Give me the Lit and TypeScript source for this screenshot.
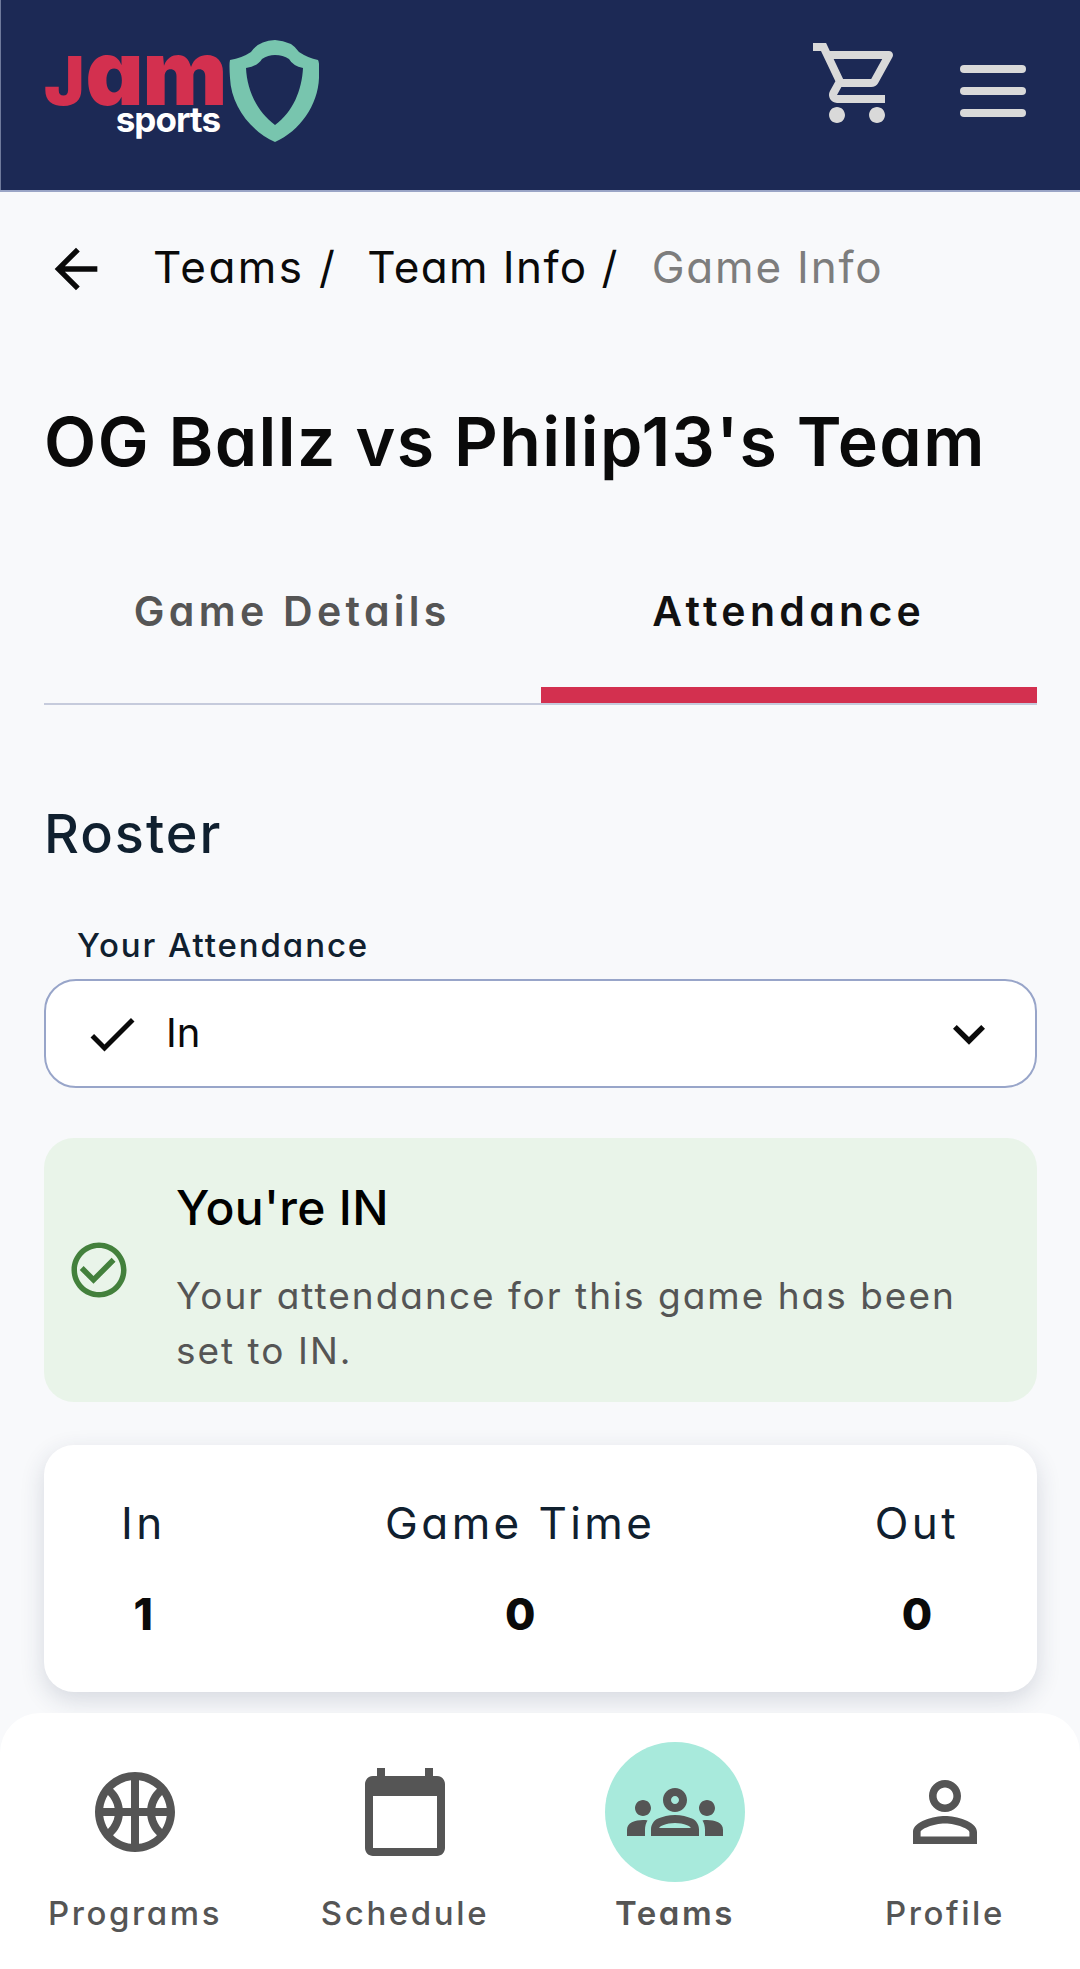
import { LitElement, html, css, svg } from "lit";
import { customElement } from "lit/decorators.js";

const icon = (d: string, size = 96) =>
  html`<svg width=${size} height=${size} viewBox="0 0 24 24" fill="currentColor"><path d=${d}></path></svg>`;

const CART = "M15.55 13c.75 0 1.41-.41 1.75-1.03l3.58-6.49c.37-.66-.11-1.48-.87-1.48H5.21l-.94-2H1v2h2l3.6 7.59-1.35 2.44C4.52 15.37 5.48 17 7 17h12v-2H7l1.1-2h7.45zM6.16 6h12.15l-2.76 5H8.53L6.16 6zM7 18c-1.1 0-1.99.9-1.99 2S5.9 22 7 22s2-.9 2-2-.9-2-2-2zm10 0c-1.1 0-1.99.9-1.99 2s.89 2 1.99 2 2-.9 2-2-.9-2-2-2z";
const BALL = "M12 2C6.48 2 2 6.48 2 12s4.48 10 10 10 10-4.48 10-10S17.52 2 12 2zM5.23 7.75C6.1 8.62 6.7 9.74 6.91 11H4.07c.15-1.18.56-2.28 1.16-3.25zM4.07 13h2.84c-.21 1.26-.81 2.38-1.68 3.25-.6-.97-1.01-2.07-1.16-3.25zM11 19.93c-1.73-.22-3.29-1-4.49-2.14 1.3-1.24 2.19-2.91 2.42-4.79H11v6.93zM11 11H8.93C8.69 9.12 7.81 7.44 6.5 6.2 7.71 5.06 9.27 4.29 11 4.07V11zm8.93 0h-2.84c.21-1.26.81-2.38 1.68-3.25.6.97 1.01 2.07 1.16 3.25zM13 4.07c1.73.22 3.29.99 4.5 2.13-1.31 1.24-2.19 2.92-2.43 4.8H13V4.07zm0 15.86V13h2.07c.24 1.88 1.12 3.55 2.42 4.79-1.2 1.14-2.76 1.92-4.49 2.14zm5.77-3.68c-.87-.87-1.46-1.99-1.68-3.25h2.84c-.15 1.18-.56 2.28-1.16 3.25z";
const CAL = "M20 3h-1V1h-2v2H7V1H5v2H4c-1.1 0-2 .9-2 2v16c0 1.1.9 2 2 2h16c1.1 0 2-.9 2-2V5c0-1.1-.9-2-2-2zm0 18H4V8h16v13z";
const GROUPS = "M4 13c1.1 0 2-.9 2-2 0-1.1-.9-2-2-2s-2 .9-2 2c0 1.1.9 2 2 2zm1.13 1.1C4.76 14.04 4.39 14 4 14c-.99 0-1.93.21-2.78.58C.48 14.9 0 15.62 0 16.43V18h4.5v-1.61c0-.83.23-1.61.63-2.29zM20 13c1.1 0 2-.9 2-2 0-1.1-.9-2-2-2s-2 .9-2 2c0 1.1.9 2 2 2zm4 3.43c0-.81-.48-1.53-1.22-1.85C21.93 14.21 20.99 14 20 14c-.39 0-.76.04-1.13.1.4.68.63 1.46.63 2.29V18H24v-1.57zm-7.76-2.78C15.07 13.13 13.63 12.75 12 12.75c-1.63 0-3.07.39-4.24.9C6.68 14.13 6 15.21 6 16.39V18h12v-1.61c0-1.18-.68-2.26-1.76-2.74zM8.07 16c.09-.23.13-.39.91-.69.97-.38 1.99-.56 3.02-.56s2.05.18 3.02.56c.77.3.81.46.91.69H8.07zM12 8c.55 0 1 .45 1 1s-.45 1-1 1-1-.45-1-1 .45-1 1-1m0-2c-1.66 0-3 1.34-3 3s1.34 3 3 3 3-1.34 3-3-1.34-3-3-3z";
const PERSON = "M12 5.9c1.16 0 2.1.94 2.1 2.1s-.94 2.1-2.1 2.1S9.9 9.16 9.9 8s.94-2.1 2.1-2.1m0 9c2.97 0 6.1 1.46 6.1 2.1v1.1H5.9V17c0-.64 3.13-2.1 6.1-2.1M12 4C9.79 4 8 5.79 8 8s1.79 4 4 4 4-1.79 4-4-1.79-4-4-4zm0 9c-2.67 0-8 1.34-8 4v3h16v-3c0-2.66-5.33-4-8-4z";
const ARROW = "M20 11H7.83l5.59-5.59L12 4l-8 8 8 8 1.41-1.41L7.83 13H20v-2z";
const CHECK = "M9 16.17L4.83 12l-1.42 1.41L9 19 21 7l-1.41-1.41z";
const CHEV = "M7.41 8.59L12 13.17l4.59-4.58L18 10l-6 6-6-6 1.41-1.41z";
const OK = "M16.59 7.58L10 14.17l-3.59-3.58L5 12l5 5 8-8zM12 2C6.48 2 2 6.48 2 12s4.48 10 10 10 10-4.48 10-10S17.52 2 12 2zm0 18c-4.42 0-8-3.58-8-8s3.58-8 8-8 8 3.58 8 8-3.58 8-8 8z";

const SHIELD = "M230 60 Q242 58 251 52 Q258 41 275 40 Q292 41 299 52 Q308 58 318 60 Q320 64 319 78 C318 105 300 131 275 142 C250 131 231 105 230 78 Q229 64 230 60Z M246 68 Q258 66 262 59 Q268 55 275 55 Q283 55 289 59 Q293 66 303 68 C302 90 293 112 275 125 C257 112 247 90 246 68Z";

@customElement("app-root")
export class AppRoot extends LitElement {
  static styles = css`
    :host { display: block; font-family: Inter, "Open Sans", sans-serif; font-feature-settings: "cv11" 1; color: #0a0a0a; }
    .page { width: 1080px; height: 1969px; background: #f8f9fb; display: flex; flex-direction: column; overflow: hidden; }
    .top { height: 190px; flex: none; background: #1c2955; border-bottom: 2px solid #9aa5c6; box-shadow: inset 1px 0 0 #6f7a9c; display: flex; align-items: flex-start; box-sizing: content-box; }
    .logo { margin: 40px 0 0 44px; display: flex; width: 275px; height: 102px; }
    .wordmark { width: 185px; display: flex; flex-direction: column; align-items: flex-start; }
    .jam { font-weight: 900; font-size: 90px; line-height: 56px; height: 56px; margin-top: 5px; color: #d3304f; letter-spacing: -1px; white-space: nowrap; }
    .jam span { font-size: 68px; text-transform: uppercase; letter-spacing: 1px; }
    .sports { font-weight: 700; font-size: 35px; line-height: 36px; color: #fff; letter-spacing: -1px; margin: 0 9px 0 0; align-self: flex-end; }
    .cart { margin: 35px 0 0 490px; color: #d9d9d9; height: 96px; }
    .menu { margin: 65px 0 0 55px; width: 66px; display: flex; flex-direction: column; gap: 14px; }
    .menu i { display: block; height: 8px; border-radius: 4px; background: #d9d9d9; }

    main { flex: 1; min-height: 0; padding: 0 43px 0 44px; display: flex; flex-direction: column; }
    .crumbs { display: flex; align-items: center; height: 60px; margin-top: 45px; font-size: 44px; flex: none; }
    .crumbs svg { flex: none; margin-top: 4px; }
    .crumbs span { white-space: nowrap; }
    .c1 { margin-left: 45px; letter-spacing: 2.4px; }
    .c2 { margin-left: 30px; letter-spacing: 1.4px; }
    .c3 { margin-left: 33px; color: #7d7d7d; letter-spacing: 1.8px; }
    h1 { margin: 99px 0 0 0; font-size: 68px; line-height: 90px; font-weight: 600; letter-spacing: 1.4px; white-space: nowrap; flex: none; }
    .tabs { display: flex; margin-top: 85px; height: 134px; flex: none; box-sizing: border-box; border-bottom: 2px solid #c6cbdc; }
    .tab { width: 50%; height: 132px; text-align: center; font-size: 41px; line-height: 50px; padding-top: 15px; font-weight: 600; letter-spacing: 4.3px; color: #555; box-sizing: border-box; }
    .tab.on { color: #111; border-bottom: 16px solid #d3304f; }
    h2 { margin: 96px 0 0 0; font-size: 54px; line-height: 66px; font-weight: 500; color: #10202f; letter-spacing: 2px; flex: none; }
    .lbl { margin: 58px 0 0 33px; font-size: 33px; line-height: 40px; font-weight: 500; color: #10202f; letter-spacing: 1.9px; flex: none; }
    .select { margin-top: 14px; height: 109px; flex: none; box-sizing: border-box; border: 2px solid #98a5c9; border-radius: 32px; background: #fff; display: flex; align-items: center; padding-left: 36px; padding-right: 34px; color: #0a0a0a; }
    .select .v { font-size: 40px; margin-left: 24px; flex: 1; line-height: 48px; margin-bottom: 2px; }
    .alert { margin-top: 50px; height: 264px; flex: none; box-sizing: border-box; border-radius: 30px; background: #e9f4e9; display: flex; align-items: center; padding-left: 22px; }
    .alert svg { color: #43803c; flex: none; }
    .alert .t { margin-left: 44px; align-self: flex-start; padding-top: 37px; }
    .alert h3 { margin: 0; font-size: 48px; line-height: 66px; font-weight: 500; color: #000; letter-spacing: 0.3px; }
    .alert p { margin: 27px 0 0; font-size: 37px; line-height: 55px; color: #555; letter-spacing: 2px; width: 810px; }
    .stats { margin-top: 43px; height: 247px; flex: none; box-sizing: border-box; border-radius: 30px; background: #fff; box-shadow: 0 8px 24px rgba(40,50,80,.16); display: flex; justify-content: space-between; padding: 50px 78px 0 77px; text-align: center; color: #10202f; }
    .stats .l { font-size: 44px; line-height: 56px; letter-spacing: 3.4px; }
    .stats .n { font-size: 44px; line-height: 56px; font-weight: 800; color: #0a0a0a; margin-top: 35px; }
    nav { flex: none; height: 256px; background: #fff; border-radius: 40px 40px 0 0; display: grid; grid-template-columns: repeat(4, 1fr); position: relative; }
    .item { display: flex; flex-direction: column; align-items: center; color: #555; }
    .ic { width: 140px; height: 140px; margin-top: 29px; border-radius: 50%; display: flex; align-items: center; justify-content: center; }
    .item.on .ic { background: #a8eadc; }
    .item span { margin-top: 9px; font-size: 33px; line-height: 44px; font-weight: 500; letter-spacing: 2.6px; white-space: nowrap; }
    .item.on span { font-weight: 600; }
  `;

  render() {
    return html`<div class="page">
      <header class="top">
        <div class="logo">
          <div class="wordmark"><div class="jam"><span>j</span>am</div><div class="sports">sports</div></div>
          <svg width="90" height="102" viewBox="229 40 90 102">
            ${svg`<path d=${SHIELD} fill="#78c5ae" fill-rule="evenodd"></path>`}
          </svg>
        </div>
        <div class="cart">${icon(CART)}</div>
        <div class="menu"><i></i><i></i><i></i></div>
      </header>
      <main>
        <div class="crumbs">
          ${icon(ARROW, 64)}
          <span class="c1">Teams /</span><span class="c2">Team Info /</span><span class="c3">Game Info</span>
        </div>
        <h1>OG Ballz vs Philip13's Team</h1>
        <div class="tabs"><div class="tab">Game Details</div><div class="tab on">Attendance</div></div>
        <h2>Roster</h2>
        <div class="lbl">Your Attendance</div>
        <div class="select">${icon(CHECK, 60)}<span class="v">In</span>${icon(CHEV, 64)}</div>
        <div class="alert">
          ${icon(OK, 66)}
          <div class="t"><h3>You're IN</h3><p>Your attendance for this game has been set to IN.</p></div>
        </div>
        <div class="stats">
          <div><div class="l">In</div><div class="n">1</div></div>
          <div><div class="l">Game Time</div><div class="n">0</div></div>
          <div><div class="l">Out</div><div class="n">0</div></div>
        </div>
      </main>
      <nav>
        <div class="item"><div class="ic">${icon(BALL)}</div><span>Programs</span></div>
        <div class="item"><div class="ic">${icon(CAL)}</div><span>Schedule</span></div>
        <div class="item on"><div class="ic">${icon(GROUPS)}</div><span>Teams</span></div>
        <div class="item"><div class="ic">${icon(PERSON)}</div><span>Profile</span></div>
      </nav>
    </div>`;
  }
}
